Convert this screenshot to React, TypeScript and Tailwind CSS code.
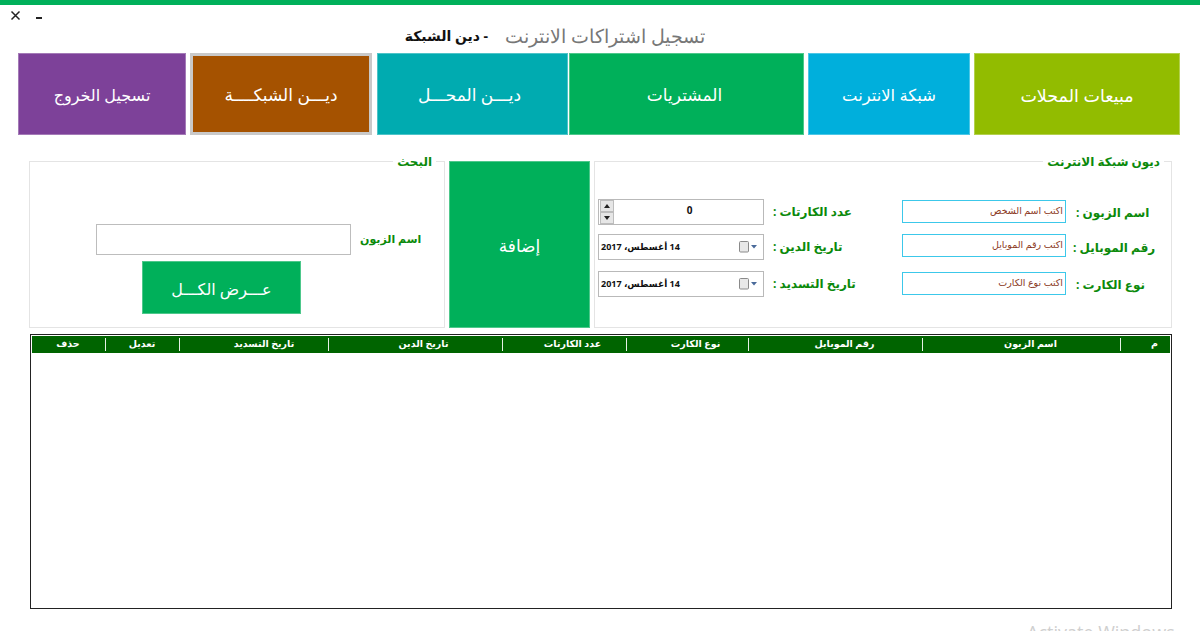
import React from "react";

const ar = "font-['Open_Sans','DejaVu_Sans',sans-serif]";

function Nav({ label, className }: { label: string; className: string }) {
  return (
    <div dir="rtl" className={`h-[82px] flex items-center justify-center pt-[2px] text-white ${className}`}>
      {label}
    </div>
  );
}

function Label({ text, className, size = "text-[12px]" }: { text: string; className: string; size?: string }) {
  return (
    <div className={className}>
      <span dir="rtl" className={`block -mt-[2px] whitespace-nowrap text-left text-[#0b8a0b] font-bold leading-none ${size}`}>{text}</span>
    </div>
  );
}

function TextField({ hint, className = "" }: { hint: string; className?: string }) {
  return (
    <div dir="rtl" className={`w-[164px] h-[23px] border border-[#3cc8ea] bg-white pr-[2px] text-[9.5px] leading-[19px] text-[#8b3a1e] whitespace-nowrap ${className}`}>
      {hint}
    </div>
  );
}

function DateField() {
  return (
    <div className="w-[166px] h-[26px] border border-[#b9b9b9] bg-white flex items-center pl-[2px] pr-[6px]">
      <span dir="rtl" className="text-[9px] font-bold text-[#111] whitespace-nowrap">14 أغسطس، 2017</span>
      <svg className="ml-auto" width="20" height="12" viewBox="0 0 20 12">
        <rect x="2.5" y="0.5" width="9" height="10.5" rx="1" fill="#e8e8e8" stroke="#8a8a8a" />
        <path d="M14 4h6l-3 3.5z" fill="#4a6a9a" />
      </svg>
    </div>
  );
}

function SpinButton({ up }: { up: boolean }) {
  return (
    <div className="w-[14px] h-[12px] bg-[#e6e6e6] border border-[#bdbdbd] flex items-center justify-center">
      <svg width="6" height="4" viewBox="0 0 6 4">
        <path d={up ? "M3 0l3 4H0z" : "M0 0h6L3 4z"} fill="#222" />
      </svg>
    </div>
  );
}

const columns: [string, number, string][] = [
  ["حذف", 74, "pr-[1px]"],
  ["تعديل", 74, "pr-[1px]"],
  ["تاريخ التسديد", 149, "pl-[20px]"],
  ["تاريخ الدين", 174, "pl-[16px]"],
  ["عدد الكارتات", 124, "pl-[16px]"],
  ["نوع الكارت", 122, "pl-[16px]"],
  ["رقم الموبايل", 174, "pl-[18px]"],
  ["اسم الزبون", 198, "pl-[18px]"],
  ["م", 49, "pl-[18px]"],
];

export default function App() {
  return (
    <div className={`w-[1200px] h-[631px] overflow-hidden bg-white flex flex-col ${ar}`}>
      <div className="h-[5px] bg-[#00b05a] shrink-0" />

      <div className="h-[48px] shrink-0 relative">
        <div className="flex items-start pl-[10px] pt-[3px] text-black">
          <svg className="mt-[2px]" width="11" height="11" viewBox="0 0 11 11">
            <path d="M1.5 1.5l8 8M9.5 1.5l-8 8" stroke="#222" strokeWidth="1.5" />
          </svg>
          <div className="ml-[15px] mt-[9px] w-[6px] h-[2px] bg-[#222]" />
        </div>
        <div className="absolute top-[18px] right-[495px] flex items-center gap-[17px] whitespace-nowrap" dir="rtl">
          <span className="text-[#777777] text-[19px] font-light leading-[26px]">تسجيل اشتراكات الانترنت</span>
          <span className="text-[#111] text-[14px] font-bold leading-[26px]">- دين الشبكة</span>
        </div>
      </div>

      <div className="flex ml-[18px] h-[82px] shrink-0">
        <Nav label="تسجيل الخروج" className="w-[168px] text-[16px] bg-[#7d4199] border border-white/30" />
        <Nav label="ديـــن الشبكــــة" className="w-[182px] ml-[4px] text-[17px] bg-[#a55200] border-[3px] border-[#c9c9c9]" />
        <Nav label="ديـــن المحـــل" className="w-[191px] ml-[5px] pr-[6px] text-[17px] bg-[#00abb0] border border-white/30" />
        <Nav label="المشتريات" className="w-[235px] ml-[1px] pr-[4px] text-[17px] bg-[#00b05a] border border-white/30" />
        <Nav label="شبكة الانترنت" className="w-[162px] ml-[4px] text-[16.4px] bg-[#00afdc] border border-white/30" />
        <Nav label="مبيعات المحلات" className="w-[206px] ml-[4px] text-[17.5px] bg-[#92bc00] border border-white/30" />
      </div>

      <div className="flex ml-[29px] mt-[26px] h-[167px] shrink-0">
        <div className="w-[416px] border border-[#e4e4e4] relative">
          <div dir="rtl" className="absolute -top-[7px] right-[8px] bg-white px-[4px] text-[#0b8a0b] text-[12px] font-bold leading-[14px]">البحث</div>
          <div className="flex items-center mt-[62px] ml-[66px]">
            <div className="w-[255px] h-[31px] border border-[#bdbdbd] bg-white" />
            <Label text="اسم الزبون" size="text-[11px]" className="ml-[9px]" />
          </div>
          <div dir="rtl" className="w-[159px] h-[53px] mt-[6px] ml-[112px] pt-[2px] bg-[#00b05a] border border-white/30 text-white text-[16px] flex items-center justify-center">عـــرض الكـــل</div>
        </div>

        <div dir="rtl" className="w-[141px] ml-[4px] pt-[2px] bg-[#00b05a] border border-white/30 text-white text-[17px] flex items-center justify-center">إضافة</div>

        <div className="w-[578px] ml-[4px] border border-[#e4e4e4] relative">
          <div dir="rtl" className="absolute -top-[7px] right-[7px] bg-white px-[4px] text-[#0b8a0b] text-[12px] font-bold leading-[14px]">ديون شبكة الانترنت</div>
          <div className="flex flex-col pt-[37px] pl-[3px]">
            <div className="flex items-start h-[26px]">
              <div className="w-[166px] h-[26px] border border-[#b9b9b9] bg-white flex items-center pl-[1px]">
                <div className="flex flex-col">
                  <SpinButton up />
                  <SpinButton up={false} />
                </div>
                <span className="flex-1 text-center text-[10px] font-bold text-[#111] pb-[3px] pl-[2px]">0</span>
              </div>
              <Label text="عدد الكارتات :" className="w-[129px] ml-[9px] mt-[9px]" />
              <TextField hint="اكتب اسم الشخص" className="mt-[1px]" />
              <Label text="اسم الزبون :" className="ml-[10px] mt-[10px]" />
            </div>
            <div className="flex items-start h-[26px] mt-[9px]">
              <DateField />
              <Label text="تاريخ الدين :" className="w-[129px] ml-[9px] mt-[9px]" />
              <TextField hint="اكتب رقم الموبايل" />
              <Label text="رقم الموبايل :" className="ml-[7px] mt-[10px]" />
            </div>
            <div className="flex items-start h-[26px] mt-[11px]">
              <DateField />
              <Label text="تاريخ التسديد :" className="w-[129px] ml-[9px] mt-[9px]" />
              <TextField hint="اكتب نوع الكارت" className="mt-[1px]" />
              <Label text="نوع الكارت :" className="ml-[10px] mt-[10px]" />
            </div>
          </div>
        </div>
      </div>

      <div className="ml-[30px] mt-[6px] w-[1142px] h-[275px] border border-[#222] shrink-0 pt-[1px] px-[1px]">
        <div className="flex items-center h-[17px] bg-[#006400]">
          {columns.map(([name, width, pad], i) => (
            <div key={name} style={{ width }} className="shrink-0 h-full flex items-center">
              <div dir="rtl" className={`flex-1 text-center text-white text-[9.5px] font-bold whitespace-nowrap ${pad}`}>
                {name}
              </div>
              {i < columns.length - 1 && <div className="w-[1px] h-[13px] bg-white/90" />}
            </div>
          ))}
        </div>
      </div>

      <div className="ml-[1027px] mt-[9px] text-[18px] text-[#cfcfcf] leading-[28px] font-['Open_Sans'] whitespace-nowrap">Activate Windows</div>
    </div>
  );
}
